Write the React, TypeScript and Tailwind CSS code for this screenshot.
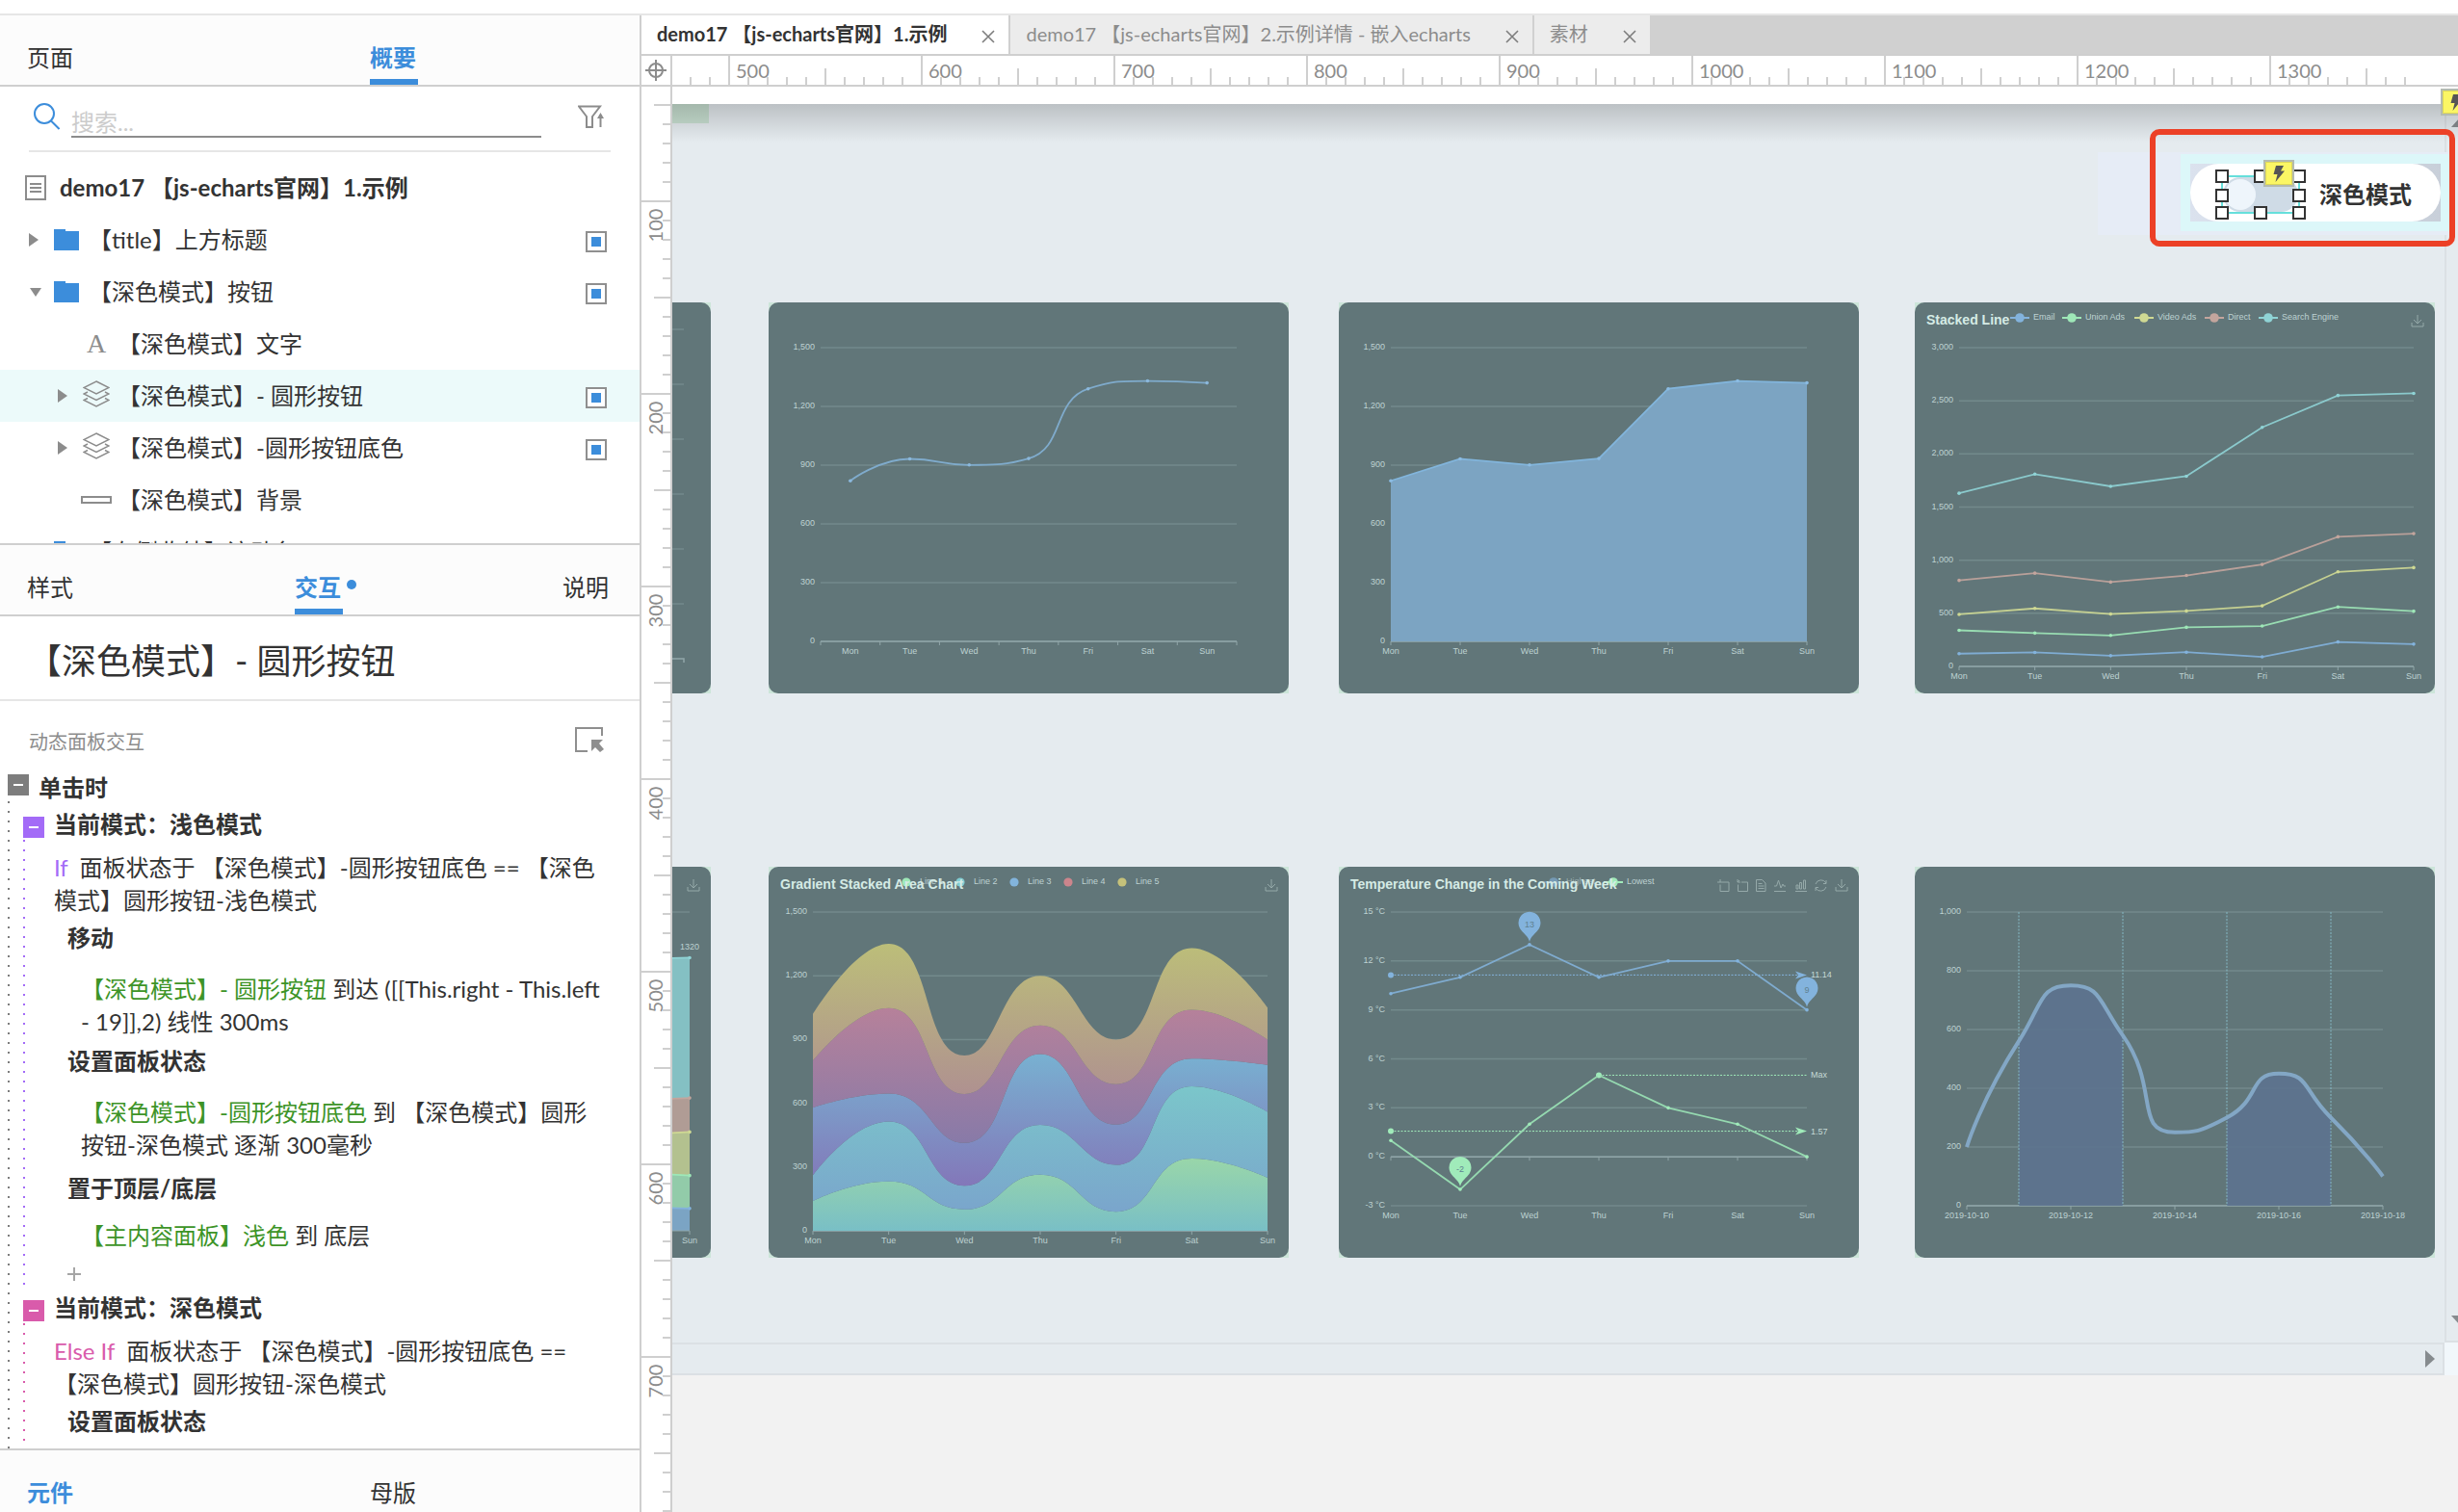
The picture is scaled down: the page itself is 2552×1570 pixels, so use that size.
import React from 'react';

const DAYS = ['Mon', 'Tue', 'Wed', 'Thu', 'Fri', 'Sat', 'Sun'];

type Pt = [number, number];

/* ---------- chart helpers ---------- */

const clamp = (v: number, a: number, b: number) => Math.max(Math.min(a, b), Math.min(Math.max(a, b), v));

// bezier smoothing with the control points kept between neighbours
const smoothSegments = (pts: Pt[], smooth: number, reverse = false): string => {
  let cp: Pt = pts[0];
  const segs: { c0: Pt; c1: Pt; from: Pt; to: Pt }[] = [];
  for (let i = 1; i < pts.length; i++) {
    const [px, py] = pts[i - 1];
    const [x, y] = pts[i];
    let c1: Pt = [x, y];
    let next: Pt = [x, y];
    if (i < pts.length - 1) {
      const [nx, ny] = pts[i + 1];
      const lenPrev = Math.hypot(x - px, y - py);
      const lenNext = Math.hypot(nx - x, ny - y);
      const ratio = lenNext / (lenNext + lenPrev);
      const ncx = clamp(x + (nx - px) * smooth * ratio, nx, x);
      const ncy = clamp(y + (ny - py) * smooth * ratio, ny, y);
      const cx = clamp(x - ((ncx - x) * lenPrev) / lenNext, px, x);
      const cy = clamp(y - ((ncy - y) * lenPrev) / lenNext, py, y);
      c1 = [cx, cy];
      next = [x + ((x - cx) * lenNext) / lenPrev, y + ((y - cy) * lenNext) / lenPrev];
    }
    segs.push({ c0: cp, c1, from: [px, py], to: [x, y] });
    cp = next;
  }
  if (reverse) {
    return segs.reverse().map((s) => `C${s.c1} ${s.c0} ${s.from}`).join(' ');
  }
  return segs.map((s) => `C${s.c0} ${s.c1} ${s.to}`).join(' ');
};

const polyline = (pts: Pt[]) => pts.map((p) => p.join(',')).join(' ');

const stack = (rows: number[][]) => {
  const acc: number[] = rows[0].map(() => 0);
  return rows.map((row) => row.map((v, i) => (acc[i] += v)));
};

interface Grid {
  left: number;
  right: number;
  top: number;
  bottom: number;
}

const WIDE: Grid = { left: 46, right: 518, top: 47, bottom: 378 };
const NARROW: Grid = { left: 54, right: 486, top: 47, bottom: 352 };

const xAt = (g: Grid, i: number, n: number) => g.left + ((g.right - g.left) * i) / (n - 1);
const yAt = (g: Grid, v: number, min: number, max: number) =>
  g.bottom - ((v - min) / (max - min)) * (g.bottom - g.top);

interface LabelProps {
  x: number;
  y: number;
  anchor?: 'start' | 'middle' | 'end';
  color?: string;
  children: React.ReactNode;
}

const Label: React.FC<LabelProps> = ({ x, y, anchor = 'middle', color = '#bed2d2', children }) => (
  <text x={x} y={y} textAnchor={anchor} dominantBaseline="central" fontSize={9} fill={color}>
    {children}
  </text>
);

const ChartTitle: React.FC<{ children: React.ReactNode }> = ({ children }) => (
  <text x={12} y={18} dominantBaseline="central" fontSize={14} fontWeight={700} fill="#d5ebe5">
    {children}
  </text>
);

interface AxesProps {
  grid: Grid;
  ticks: string[]; // top to bottom
  labels: string[];
  labelXs: number[];
  tickXs: number[];
  axisY?: number;
}

const Axes: React.FC<AxesProps> = ({ grid, ticks, labels, labelXs, tickXs, axisY = grid.bottom }) => (
  <g>
    {ticks.map((t, i) => {
      const y = grid.top + ((grid.bottom - grid.top) * i) / (ticks.length - 1);
      return (
        <g key={t}>
          <line x1={grid.left} x2={grid.right} y1={y} y2={y} stroke="#738a8c" strokeWidth={1.5} />
          <Label x={grid.left - 6} y={y - 1} anchor="end">{t}</Label>
        </g>
      );
    })}
    <line x1={grid.left} x2={grid.right} y1={axisY} y2={axisY} stroke="#91a6a9" strokeWidth={1.5} />
    {tickXs.map((x) => (
      <line key={x} x1={x} x2={x} y1={axisY} y2={axisY + 4} stroke="#91a6a9" strokeWidth={1} />
    ))}
    {labels.map((l, i) => (
      <Label key={l} x={labelXs[i]} y={grid.bottom + 10}>{l}</Label>
    ))}
  </g>
);

const DownloadIcon: React.FC<{ x?: number }> = ({ x = 516 }) => (
  <path
    d={`M${x} 21v4h12v-4M${x + 6} 13v9M${x + 2} 18l4 4 4-4`}
    fill="none"
    stroke="#95a9a9"
    strokeWidth={1}
  />
);

const Dots: React.FC<{ pts: Pt[]; color: string }> = ({ pts, color }) => (
  <g fill={color}>
    {pts.map(([x, y]) => (
      <circle key={x} cx={x} cy={y} r={1.8} />
    ))}
  </g>
);

const Card: React.FC<{ children: React.ReactNode; name: string }> = ({ children, name }) => (
  <div className="shrink-0 bg-[#cce5d9]">
    <svg
      viewBox="0 0 540 406"
      role="img"
      aria-label={name}
      className="block h-[406px] w-[540px] rounded-[10px] bg-[#617679] font-['Liberation_Sans',sans-serif]"
    >
      {children}
    </svg>
  </div>
);

/* ---------- charts ---------- */

const WEEK_VALUES = [820, 932, 901, 934, 1290, 1330, 1320];
const THOUSANDS = ['1,500', '1,200', '900', '600', '300', '0'];

const SmoothLine = () => {
  const step = (NARROW.right - NARROW.left) / 7;
  const xs = DAYS.map((_, i) => NARROW.left + step * (i + 0.5));
  const pts = WEEK_VALUES.map((v, i): Pt => [xs[i], yAt(NARROW, v, 0, 1500)]);
  return (
    <Card name="Smoothed line">
      <Axes
        grid={NARROW}
        ticks={THOUSANDS}
        labels={DAYS}
        labelXs={xs}
        tickXs={Array.from({ length: 8 }, (_, i) => NARROW.left + step * i)}
      />
      <path d={`M${pts[0]} ${smoothSegments(pts, 0.5)}`} fill="none" stroke="#7fabcc" strokeWidth={1.8} />
      <Dots pts={pts} color="#8bb8dc" />
    </Card>
  );
};

const BasicArea = () => {
  const xs = DAYS.map((_, i) => xAt(NARROW, i, 7));
  const pts = WEEK_VALUES.map((v, i): Pt => [xs[i], yAt(NARROW, v, 0, 1500)]);
  return (
    <Card name="Basic area">
      <Axes grid={NARROW} ticks={THOUSANDS} labels={DAYS} labelXs={xs} tickXs={xs} />
      <polygon
        points={`${polyline(pts)} ${NARROW.right},${NARROW.bottom} ${NARROW.left},${NARROW.bottom}`}
        fill="#7da6c5"
        fillOpacity={0.96}
      />
      <polyline points={polyline(pts)} fill="none" stroke="#82b5dc" strokeWidth={1.8} />
      <Dots pts={pts} color="#8bbbe2" />
    </Card>
  );
};

const STACKED = [
  { name: 'Email', color: '#83b3dd', dot: 109, data: [120, 132, 101, 134, 90, 230, 210] },
  { name: 'Union Ads', color: '#9ee8b8', dot: 163, data: [220, 182, 191, 234, 290, 330, 310] },
  { name: 'Video Ads', color: '#cfd993', dot: 238, data: [150, 232, 201, 154, 190, 330, 410] },
  { name: 'Direct', color: '#c3a59d', dot: 311, data: [320, 332, 301, 334, 390, 330, 320] },
  { name: 'Search Engine', color: '#8fd3d5', dot: 367, data: [820, 932, 901, 934, 1290, 1330, 1320] },
];
const STACKED_TICKS = ['3,000', '2,500', '2,000', '1,500', '1,000', '500', '0'];

const LegendMark: React.FC<{ x: number; color: string }> = ({ x, color }) => (
  <g>
    <line x1={x - 10} x2={x + 10} y1={16} y2={16} stroke={color} strokeWidth={1.8} />
    <circle cx={x} cy={16} r={4.8} fill={color} />
  </g>
);

const StackedLine = () => {
  const xs = DAYS.map((_, i) => xAt(WIDE, i, 7));
  const sums = stack(STACKED.map((s) => s.data));
  return (
    <Card name="Stacked Line">
      <Axes grid={WIDE} ticks={STACKED_TICKS} labels={DAYS} labelXs={xs} tickXs={xs} />
      {STACKED.map((s, n) => {
        const pts = sums[n].map((v, i): Pt => [xs[i], yAt(WIDE, v, 0, 3000)]);
        return (
          <g key={s.name}>
            <polyline points={polyline(pts)} fill="none" stroke={s.color} strokeOpacity={0.9} strokeWidth={1.8} />
            <Dots pts={pts} color={s.color} />
            <LegendMark x={s.dot} color={s.color} />
            <Label x={s.dot + 14} y={15} anchor="start">{s.name}</Label>
          </g>
        );
      })}
      <ChartTitle>Stacked Line</ChartTitle>
      <DownloadIcon />
    </Card>
  );
};

// only the right edge of these two cards is scrolled into view
const BarEdge = () => (
  <Card name="Bar">
    {[28, 85, 142, 199, 256, 313].map((y) => (
      <line key={y} x1={54} x2={512} y1={y} y2={y} stroke="#738a8c" strokeWidth={1.5} />
    ))}
    <path d="M54 370H512v4" fill="none" stroke="#91a6a9" strokeWidth={1.5} />
  </Card>
);

const AREA_FILLS = ['#7ba4c4', '#92cba9', '#b3c18f', '#b09c95', '#84c0c3'];

const StackedArea = () => {
  const xs = DAYS.map((_, i) => xAt(WIDE, i, 7));
  const sums = stack(STACKED.map((s) => s.data));
  return (
    <Card name="Stacked area">
      <line x1={WIDE.left} x2={WIDE.right} y1={WIDE.top} y2={WIDE.top} stroke="#738a8c" strokeWidth={1.5} />
      {[4, 3, 2, 1, 0].map((n) => {
        const pts = sums[n].map((v, i): Pt => [xs[i], yAt(WIDE, v, 0, 3000)]);
        return (
          <g key={n}>
            <polygon points={`${polyline(pts)} ${WIDE.right},${WIDE.bottom} ${WIDE.left},${WIDE.bottom}`} fill={AREA_FILLS[n]} />
            <polyline points={polyline(pts)} fill="none" stroke={STACKED[n].color} strokeWidth={1.8} />
            <Dots pts={pts} color={STACKED[n].color} />
          </g>
        );
      })}
      <path d={`M${WIDE.left} ${WIDE.bottom}H${WIDE.right}v4`} fill="none" stroke="#91a6a9" />
      <Label x={518} y={83}>1320</Label>
      <Label x={518} y={388}>Sun</Label>
      <DownloadIcon />
    </Card>
  );
};

const GRADIENT_LINES = [
  { name: 'Line 1', dot: 143, color: '#9ee8b8', from: '#99d6a9', to: '#79bfc6', data: [140, 232, 101, 264, 90, 340, 250] },
  { name: 'Line 2', dot: 199, color: '#7fccd2', from: '#7bc6ca', to: '#7aa5cc', data: [120, 282, 111, 234, 220, 340, 310] },
  { name: 'Line 3', dot: 255, color: '#82b4dc', from: '#78b1d1', to: '#8377b9', data: [320, 132, 201, 334, 190, 130, 220] },
  { name: 'Line 4', dot: 311, color: '#cc858c', from: '#b6819a', to: '#887aa8', data: [220, 402, 231, 134, 190, 230, 120] },
  { name: 'Line 5', dot: 367, color: '#c5c17a', from: '#bcbe79', to: '#af9190', data: [220, 302, 181, 234, 210, 290, 150] },
];

const GradientArea = () => {
  const xs = DAYS.map((_, i) => xAt(WIDE, i, 7));
  const sums = stack(GRADIENT_LINES.map((l) => l.data));
  const lines = sums.map((row) => row.map((v, i): Pt => [xs[i], yAt(WIDE, v, 0, 1500)]));
  return (
    <Card name="Gradient Stacked Area Chart">
      <defs>
        {GRADIENT_LINES.map((l, n) => (
          <linearGradient key={l.name} id={`area-${n}`} x1="0" y1="0" x2="0" y2="1">
            <stop offset="0" stopColor={l.from} />
            <stop offset="1" stopColor={l.to} />
          </linearGradient>
        ))}
      </defs>
      <Axes grid={WIDE} ticks={THOUSANDS} labels={DAYS} labelXs={xs} tickXs={xs} />
      {GRADIENT_LINES.map((l, n) => {
        const top = lines[n];
        const below = n === 0
          ? `L${WIDE.right},${WIDE.bottom} L${WIDE.left},${WIDE.bottom}`
          : `L${lines[n - 1][6]} ${smoothSegments(lines[n - 1], 0.5, true)}`;
        return (
          <g key={l.name}>
            <path d={`M${top[0]} ${smoothSegments(top, 0.5)} ${below}Z`} fill={`url(#area-${n})`} />
            <circle cx={l.dot} cy={16} r={4.6} fill={l.color} />
            <Label x={l.dot + 14} y={15} anchor="start">{l.name}</Label>
          </g>
        );
      })}
      <ChartTitle>Gradient Stacked Area Chart</ChartTitle>
      <DownloadIcon />
    </Card>
  );
};

const Pin: React.FC<{ at: Pt; color: string; value: string }> = ({ at: [x, y], color, value }) => (
  <g>
    <path
      d={`M${x} ${y - 3}C${x - 1} ${y - 9} ${x - 7} ${y - 12} ${x - 10} ${y - 17}A11.5 11.5 0 1 1 ${x + 10} ${y - 17}C${x + 7} ${y - 12} ${x + 1} ${y - 9} ${x} ${y - 3}Z`}
      fill={color}
    />
    <Label x={x} y={y - 21} color="#5f8291">{value}</Label>
  </g>
);

const Temperature = () => {
  const g = NARROW;
  const xs = DAYS.map((_, i) => xAt(g, i, 7));
  const at = (v: number) => yAt(g, v, -3, 15);
  const high = [10, 11, 13, 11, 12, 12, 9].map((v, i): Pt => [xs[i], at(v)]);
  const low = [1, -2, 2, 5, 3, 2, 0].map((v, i): Pt => [xs[i], at(v)]);
  const blue = '#83b3dd';
  const green = '#a0ebba';
  return (
    <Card name="Temperature Change in the Coming Week">
      <Axes
        grid={g}
        ticks={['15 °C', '12 °C', '9 °C', '6 °C', '3 °C', '0 °C', '-3 °C']}
        labels={DAYS}
        labelXs={xs}
        tickXs={xs}
        axisY={at(0)}
      />
      {[{ v: 11.14, c: blue }, { v: 1.57, c: green }].map(({ v, c }) => (
        <g key={v}>
          <line x1={g.left} x2={g.right - 10} y1={at(v)} y2={at(v)} stroke={c} strokeDasharray="2 1.5" />
          <circle cx={g.left} cy={at(v)} r={3} fill={c} />
          <path d={`M${g.right} ${at(v)}l-12 -4l3 4l-3 4Z`} fill={c} />
          <Label x={g.right + 4} y={at(v)} anchor="start" color="#c5d9d6">{v}</Label>
        </g>
      ))}
      <line x1={xs[3]} x2={g.right} y1={at(5)} y2={at(5)} stroke={green} strokeDasharray="2 1.5" />
      <circle cx={xs[3]} cy={at(5)} r={3} fill={green} />
      <Label x={g.right + 4} y={at(5)} anchor="start" color="#c5d9d6">Max</Label>
      <polyline points={polyline(high)} fill="none" stroke="#7fabcf" strokeWidth={1.8} />
      <polyline points={polyline(low)} fill="none" stroke="#95d9b0" strokeWidth={1.8} />
      <Dots pts={high} color={blue} />
      <Dots pts={low} color={green} />
      <Pin at={high[2]} color={blue} value="13" />
      <Pin at={high[6]} color={blue} value="9" />
      <Pin at={low[1]} color={green} value="-2" />
      <g opacity={0.6}>
        <LegendMark x={223} color={blue} />
        <Label x={236} y={15} anchor="start">Highest</Label>
      </g>
      <LegendMark x={285} color={green} />
      <Label x={299} y={15} anchor="start">Lowest</Label>
      <ChartTitle>Temperature Change in the Coming Week</ChartTitle>
      {/* toolbox: zoom, zoom back, data view, line, bar, restore, save */}
      <g fill="none" stroke="#95a9a9" strokeWidth={1}>
        <path d="M393 16h3M396 13v3h9v9.500h-9v-7M399 16" />
        <path d="M414 13v3h3M414 16l2-2M418 16h6.500v9.500h-10v-7" />
        <path d="M433.500 13.500h6l3.500 3.500v8.500h-9.500zM435.500 17.500h4M435.500 20h6M435.500 22.500h6" />
        <path d="M452 25.500h12M452 20h2.500l2-6 2.500 8 2-4 1 2h2" />
        <path d="M474 25.500h12M475 19h2v4h-2zM478.500 16.500h2v6.500h-2zM482.500 14h2v9h-2z" />
        <path d="M495 18a6 6 0 0 1 11-1M506 21a6 6 0 0 1-11 1M506 14v3.500h-3M495 25v-3.500h3" />
      </g>
      <DownloadIcon />
    </Card>
  );
};

const SegmentArea = () => {
  const g = NARROW;
  const pts = [200, 560, 750, 580, 250, 300, 450, 300, 100].map(
    (v, i): Pt => [xAt(g, i, 9), yAt(g, v, 0, 1000)],
  );
  const curve = `M${pts[0]} ${smoothSegments(pts, 0.6)}`;
  const labelXs = [0, 2, 4, 6, 8].map((i) => pts[i][0]);
  return (
    <Card name="Area pieces">
      <defs>
        <clipPath id="pieces">
          <rect x={pts[1][0]} y={g.top} width={108} height={305} />
          <rect x={pts[5][0]} y={g.top} width={108} height={305} />
        </clipPath>
      </defs>
      <Axes
        grid={g}
        ticks={['1,000', '800', '600', '400', '200', '0']}
        labels={['2019-10-10', '2019-10-12', '2019-10-14', '2019-10-16', '2019-10-18']}
        labelXs={labelXs}
        tickXs={labelXs}
      />
      <path d={`${curve} L${g.right},${g.bottom} L${g.left},${g.bottom}Z`} fill="#5c7390" fillOpacity={0.88} clipPath="url(#pieces)" />
      {[1, 3, 5, 7].map((i) => (
        <line key={i} x1={pts[i][0]} x2={pts[i][0]} y1={g.top} y2={g.bottom} stroke="#85b9c6" strokeDasharray="2 1.5" />
      ))}
      <path d={curve} fill="none" stroke="#83a7c5" strokeWidth={4} />
    </Card>
  );
};

/* ---------- left panels ---------- */

interface PanelTabProps {
  label: string;
  active?: boolean;
  underline?: boolean;
  dot?: boolean;
}

const PanelTab: React.FC<PanelTabProps> = ({ label, active, underline, dot }) => (
  <button
    className={`relative flex h-[72px] w-[50px] shrink-0 items-center pt-4 whitespace-nowrap ${
      active ? 'font-bold text-[#3c8ddb]' : 'text-[#333]'
    } ${underline ? 'shadow-[inset_0_-6px_0_#3c8ddb]' : ''}`}
  >
    {label}
    {dot && <span className="absolute top-9 left-[54px] h-2.5 w-2.5 rounded-full bg-[#3c8ddb]" />}
  </button>
);

const ViewToggle = () => (
  <button aria-label="显示" className="mt-1 ml-auto flex h-[22px] w-[22px] items-center justify-center border-2 border-[#8f8f8f] bg-white">
    <span className="h-2.5 w-2.5 bg-[#3c8ddb]" />
  </button>
);

const Arrow: React.FC<{ open?: boolean }> = ({ open }) => (
  <svg viewBox="0 0 14 14" className="h-3.5 w-3.5 shrink-0" fill="#8c8c8c" aria-hidden="true">
    <path d={open ? 'M1 3H13L7 12Z' : 'M0 0V14L10 7Z'} />
  </svg>
);

const FolderIcon = () => (
  <svg viewBox="0 0 26 22" className="h-[22px] w-[26px] shrink-0" fill="#3c8ddb" aria-hidden="true">
    <path d="M0 0H12V2H26V22H0Z" />
  </svg>
);

const LayersIcon = () => (
  <svg viewBox="0 0 28 28" className="mb-1 h-7 w-7 shrink-0" fill="none" stroke="#8c8c8c" strokeWidth="1.4" aria-hidden="true">
    <path d="M14 1L27 7.500L14 14L1 7.500Z" />
    <path d="M5 12L1 14L14 20.500L27 14L23 12" />
    <path d="M5 18.500L1 20.500L14 27L27 20.500L23 18.500" />
  </svg>
);

interface OutlineItem {
  label: string;
  icon: 'folder' | 'text' | 'layers' | 'rect';
  open?: boolean;
  toggle?: boolean;
  selected?: boolean;
}

const OUTLINE: OutlineItem[] = [
  { label: '【title】上方标题', icon: 'folder', toggle: true },
  { label: '【深色模式】按钮', icon: 'folder', open: true, toggle: true },
  { label: '【深色模式】文字', icon: 'text' },
  { label: '【深色模式】- 圆形按钮', icon: 'layers', toggle: true, selected: true },
  { label: '【深色模式】-圆形按钮底色', icon: 'layers', toggle: true },
  { label: '【深色模式】背景', icon: 'rect' },
  { label: '【右侧收纳】滚动条', icon: 'folder' },
];

const OutlineRow: React.FC<{ item: OutlineItem }> = ({ item }) => {
  const child = item.icon !== 'folder';
  return (
    <li className={`flex h-[54px] shrink-0 items-center pr-[34px] ${child ? 'pl-[60px]' : 'pl-[30px]'} ${item.selected ? 'bg-[#ecfafa]' : ''}`}>
      <span className="flex h-full w-3.5 items-center">
        {(item.icon === 'layers' || item.icon === 'folder') && <Arrow open={item.open} />}
      </span>
      <span className={`flex shrink-0 items-center justify-center ${child ? 'ml-2.5 w-8' : 'ml-3 w-[26px]'}`}>
        {item.icon === 'folder' && <FolderIcon />}
        {item.icon === 'layers' && <LayersIcon />}
        {item.icon === 'text' && (
          <span className="font-['Liberation_Serif',serif] text-[28px] leading-none text-[#8c8c8c]">A</span>
        )}
        {item.icon === 'rect' && <span className="h-2 w-8 border-2 border-[#8c8c8c]" />}
      </span>
      <span className={`whitespace-nowrap ${child ? 'ml-1.5' : 'ml-2.5'}`}>{item.label}</span>
      {item.toggle && <ViewToggle />}
    </li>
  );
};

const OutlinePanel = () => (
  <section className="flex h-[550px] shrink-0 flex-col overflow-hidden border-b-2 border-[#cfcfcf]">
    <div className="flex shrink-0 border-b-2 border-[#cfcfcf] bg-[#fcfcfc] pl-7">
      <div className="w-[356px]">
        <PanelTab label="页面" />
      </div>
      <PanelTab label="概要" active underline />
    </div>
    <div className="mx-[30px] flex h-[68px] shrink-0 items-center border-b-2 border-[#e6e6e6]">
      <svg viewBox="0 0 28 28" className="mx-1 mb-1 h-7 w-7 shrink-0" fill="none" stroke="#3c8ddb" strokeWidth="2" aria-hidden="true">
        <circle cx="12" cy="11" r="10" />
        <path d="M19 18.500L27.500 27" />
      </svg>
      <input
        type="text"
        aria-label="搜索"
        placeholder="搜索..."
        className="mt-1 ml-2 h-9 w-[488px] border-b-2 border-[#8c8c8c] bg-transparent pt-1 outline-none placeholder:text-[#ccc]"
      />
      <button aria-label="筛选" className="mb-1 ml-auto mr-1.5">
        <svg viewBox="0 0 28 24" className="h-6 w-7" fill="none" stroke="#8c8c8c" strokeWidth="2">
          <path d="M1 1.500H23L15 12V23H9V12Z" />
          <path d="M23.500 23V10" />
          <path d="M23.500 8L27 14H20Z" fill="#8c8c8c" stroke="none" />
        </svg>
      </button>
    </div>
    <ul className="flex flex-col pt-2.5">
      <li className="flex h-[54px] shrink-0 items-center pl-[26px] font-bold">
        <svg viewBox="0 0 22 26" className="mr-3.5 h-[26px] w-[22px]" fill="none" stroke="#8c8c8c" strokeWidth="2" aria-hidden="true">
          <path d="M1 1H21V25H1ZM5 9H17M5 13H17M5 17H17" />
        </svg>
        demo17 【js-echarts官网】1.示例
      </li>
      {OUTLINE.map((item) => (
        <OutlineRow key={item.label} item={item} />
      ))}
    </ul>
  </section>
);

const Minus: React.FC<{ color: string }> = ({ color }) => (
  <button aria-label="折叠" className={`flex h-[22px] w-[22px] shrink-0 items-center justify-center ${color}`}>
    <span className="h-0.5 w-2.5 bg-white" />
  </button>
);

interface BranchProps {
  title: string;
  box: string;
  rail: string;
  children: React.ReactNode;
}

const Branch: React.FC<BranchProps> = ({ title, box, rail, children }) => (
  <div className="flex pt-2">
    <div className="flex w-[22px] shrink-0 flex-col pt-2">
      <Minus color={box} />
      <span className={`mt-0.5 w-0.5 flex-1 ${rail}`} />
    </div>
    <div className="ml-2.5 whitespace-nowrap">
      <h4 className="leading-8 font-bold">{title}</h4>
      {children}
    </div>
  </div>
);

const Target: React.FC<{ children: React.ReactNode }> = ({ children }) => (
  <span className="text-[#3d9427]">{children}</span>
);

const InteractionPanel = () => (
  <section className="flex min-h-0 flex-1 flex-col overflow-hidden">
    <div className="flex shrink-0 justify-between border-b-2 border-[#cfcfcf] bg-[#fcfcfc] pr-[30px] pl-7">
      <PanelTab label="样式" />
      <PanelTab label="交互" active underline dot />
      <PanelTab label="说明" />
    </div>
    <h2 className="shrink-0 border-b-2 border-[#e6e6e6] pt-1.5 pl-7 text-4xl leading-[80px]">【深色模式】- 圆形按钮</h2>
    <div className="flex h-[76px] shrink-0 items-center justify-between pt-1 pr-[37px] pl-[30px]">
      <span className="pt-1 text-xl text-[#8c8c8c]">动态面板交互</span>
      <button aria-label="选择目标">
        <svg viewBox="0 0 30 28" className="h-7 w-[30px]" fill="none" stroke="#8f8f8f" strokeWidth="2">
          <path d="M28 10V2H1V26H13" />
          <path d="M17 14H29L25 18L30 24L26 27L21 22L17 26Z" fill="#8f8f8f" stroke="none" />
        </svg>
      </button>
    </div>
    <div className="flex min-h-0 flex-1 flex-col pl-2">
      <div className="flex h-7 shrink-0">
        <Minus color="bg-[#7d7d7d]" />
        <h3 className="ml-2.5 leading-7 font-bold">单击时</h3>
      </div>
      <div className="flex min-h-0 flex-1">
        <span className="w-0.5 shrink-0 bg-[repeating-linear-gradient(to_bottom,#7d7d7d_0_2px,transparent_2px_10px)]" />
        <div className="ml-3.5">
          <Branch
            title="当前模式：浅色模式"
            box="bg-[#a36bf7]"
            rail="bg-[repeating-linear-gradient(to_bottom,#a36bf7_0_2px,transparent_2px_10px)]"
          >
            <p className="mt-3 leading-[34px]">
              <span className="text-[#a36bf7]">If</span>&nbsp; 面板状态于 【深色模式】-圆形按钮底色 == 【深色<br />
              模式】圆形按钮-浅色模式
            </p>
            <h5 className="mt-1.5 ml-3.5 leading-8 font-bold">移动</h5>
            <p className="mt-5 ml-7 leading-[34px]">
              <Target>【深色模式】- 圆形按钮</Target> 到达 ([[This.right - This.left<br />
              - 19]],2) 线性 300ms
            </p>
            <h5 className="mt-2 ml-3.5 leading-8 font-bold">设置面板状态</h5>
            <p className="mt-5 ml-7 leading-[34px]">
              <Target>【深色模式】-圆形按钮底色</Target> 到 【深色模式】圆形<br />
              按钮-深色模式 逐渐 300毫秒
            </p>
            <h5 className="mt-3 ml-3.5 leading-8 font-bold">置于顶层/底层</h5>
            <p className="mt-4 ml-7 leading-[34px]">
              <Target>【主内容面板】浅色</Target> 到 底层
            </p>
            <button aria-label="添加" className="mt-4 mb-1 ml-3.5 block">
              <svg viewBox="0 0 14 14" className="h-3.5 w-3.5" stroke="#a6a6a6" strokeWidth="2">
                <path d="M7 0V14M0 7H14" />
              </svg>
            </button>
          </Branch>
          <Branch
            title="当前模式：深色模式"
            box="bg-[#d95bab]"
            rail="bg-[repeating-linear-gradient(to_bottom,#d95bab_0_2px,transparent_2px_10px)]"
          >
            <p className="mt-3 leading-[34px]">
              <span className="text-[#d95bab]">Else If</span>&nbsp; 面板状态于 【深色模式】-圆形按钮底色 ==<br />
              【深色模式】圆形按钮-深色模式
            </p>
            <h5 className="mt-1.5 ml-3.5 leading-8 font-bold">设置面板状态</h5>
            <div className="h-4" />
          </Branch>
        </div>
      </div>
    </div>
  </section>
);

/* ---------- canvas ---------- */

const DOC_TABS = [
  { label: 'demo17 【js-echarts官网】1.示例', active: true },
  { label: 'demo17 【js-echarts官网】2.示例详情 - 嵌入echarts' },
  { label: '素材' },
];

// one ruler unit is two pixels
const TICKS_X = Array.from({ length: 90 }, (_, i) => 480 + i * 10);
const TICKS_Y = Array.from({ length: 74 }, (_, i) => 50 + i * 10);

const tickLength = (v: number) => (v % 100 === 0 ? 30 : v % 50 === 0 ? 17 : 8);

const TopRuler = () => (
  <svg className="h-[30px] min-w-0 flex-1" fill="#cfcfcf" aria-hidden="true">
    {TICKS_X.map((v) => {
      const len = tickLength(v);
      const x = 58 + (v - 500) * 2;
      return (
        <g key={v}>
          <rect x={x} y={30 - len} width={2} height={len} />
          {v % 100 === 0 && (
            <text x={x + 8} y={15} dominantBaseline="central" fontSize={20} fill="#8c8c8c">{v}</text>
          )}
        </g>
      );
    })}
  </svg>
);

const SideRuler = () => (
  <svg className="h-full w-8 shrink-0 border-r-2 border-[#cfcfcf] bg-white" fill="#cfcfcf" aria-hidden="true">
    {TICKS_Y.map((v) => {
      const len = tickLength(v);
      const y = 118 + (v - 100) * 2;
      return (
        <g key={v}>
          <rect x={30 - len} y={y} width={len} height={2} />
          {v % 100 === 0 && (
            <text
              transform={`translate(14 ${y + 26}) rotate(-90)`}
              textAnchor="middle"
              dominantBaseline="central"
              fontSize={20}
              fill="#8c8c8c"
            >
              {v}
            </text>
          )}
        </g>
      );
    })}
  </svg>
);

const BoltBadge = () => (
  <svg viewBox="0 0 32 28" className="block h-7 w-8" aria-hidden="true">
    <rect x="1" y="1" width="30" height="26" fill="#fbf664" stroke="#b4bbb0" strokeWidth="2" />
    <path d="M2.500 2.500H29.500V25.500H2.500Z" fill="none" stroke="#dcd65a" />
    <path d="M13 6H21L18 11.500H22L12.500 23L14.500 15H10.500Z" fill="#555" />
  </svg>
);

const Handle: React.FC<{ className: string }> = ({ className }) => (
  <span className={`absolute h-3.5 w-3.5 border-2 border-[#333] bg-white ${className}`} />
);

const DarkModeWidget = () => (
  <>
    <div className="absolute top-[50px] left-[1480px] h-[86px] w-[366px] bg-[#e6ecf6]" />
    <div className="absolute top-[52px] left-[1566px] flex h-20 w-[280px] items-center bg-[#dcf7f9] pl-2.5">
      <div className="h-[60px] w-[260px] bg-linear-to-r from-[#dbe2ee] to-[#c8cfd9]">
        <div className="flex h-full items-center rounded-[30px] bg-white pt-1 pl-8">
          <div className="relative h-10 w-[82px] border-2 border-[#66dfdb]">
            <button
              role="switch"
              aria-checked="false"
              aria-labelledby="mode-label"
              className="flex h-full w-full items-center rounded-full bg-[#cfdbe6] pl-0.5"
            >
              <span className="h-8 w-8 rounded-full bg-[#eef5fb]" />
            </button>
            <Handle className="-top-2 -left-2" />
            <Handle className="-top-2 left-8" />
            <Handle className="-top-2 -right-2" />
            <Handle className="top-3 -left-2" />
            <Handle className="top-3 -right-2" />
            <Handle className="-bottom-2 -left-2" />
            <Handle className="-bottom-2 left-8" />
            <Handle className="-right-2 -bottom-2" />
            <span className="absolute -top-[18px] left-[42px]">
              <BoltBadge />
            </span>
          </div>
          <span id="mode-label" className="ml-5 text-2xl font-bold whitespace-nowrap">深色模式</span>
        </div>
      </div>
    </div>
    <div className="absolute top-[26px] left-[1534px] h-[122px] w-[317px] rounded-[10px] border-[6px] border-[#ec4026]" />
  </>
);

const Canvas = () => (
  <div className="min-w-0 flex-1 overflow-hidden bg-[#f2f2f2]">
    <div className="h-[18px] bg-white" />
    <div className="relative flex bg-[#e5ebef]">
      <div className="absolute top-0 left-0 h-5 w-[38px] bg-[#c8e0d1]" />
      <div className="absolute top-0 left-0 h-10 w-full bg-linear-to-b from-black/18 to-transparent" />
      <div className="w-[1840px] shrink-0">
        <div className="flex pt-[206px]">
          <div className="flex w-10 shrink-0 justify-end overflow-hidden"><BarEdge /></div>
          <div className="ml-[60px]"><SmoothLine /></div>
          <div className="ml-[52px]"><BasicArea /></div>
          <div className="ml-[58px]"><StackedLine /></div>
        </div>
        <div className="flex pt-[180px] pb-[88px]">
          <div className="flex w-10 shrink-0 justify-end overflow-hidden"><StackedArea /></div>
          <div className="ml-[60px]"><GradientArea /></div>
          <div className="ml-[52px]"><Temperature /></div>
          <div className="ml-[58px]"><SegmentArea /></div>
        </div>
        <div className="flex h-[34px] items-center justify-end border-2 border-l-0 border-[#dbe0e4] pr-2">
          <svg viewBox="0 0 10 18" className="h-[18px] w-2.5" fill="#868b8e" aria-hidden="true">
            <path d="M0 0V18L10 9Z" />
          </svg>
        </div>
      </div>
      <div className="flex w-8 shrink-0 flex-col">
        <div className="flex flex-1 flex-col items-center justify-between border-2 border-t-0 border-[#dbe0e4] pt-3.5 pb-4">
          <svg viewBox="0 0 18 10" className="h-2.5 w-[18px]" fill="#868b8e" aria-hidden="true">
            <path d="M0 10L9 0L18 10Z" />
          </svg>
          <svg viewBox="0 0 18 10" className="h-2.5 w-[18px]" fill="#868b8e" aria-hidden="true">
            <path d="M0 0L9 10L18 0Z" />
          </svg>
        </div>
        <div className="h-[34px] bg-[#f1f7fb]" />
      </div>
      <span className="absolute -top-4 left-[1836px]">
        <BoltBadge />
      </span>
      <DarkModeWidget />
    </div>
  </div>
);

export default function App() {
  return (
    <div className="flex h-screen flex-col overflow-hidden bg-white font-['Lato','Noto_Sans_CJK_SC',sans-serif] text-2xl text-[#333]">
      <header className="h-4 shrink-0 border-b-2 border-[#e6e6e6]" />
      <div className="flex min-h-0 flex-1">
        <aside className="flex w-[666px] shrink-0 flex-col border-r-2 border-[#cfcfcf]">
          <OutlinePanel />
          <InteractionPanel />
          <div className="flex h-[66px] shrink-0 overflow-hidden border-t-2 border-[#cfcfcf] bg-[#fcfcfc] pl-7">
            <div className="w-[356px]">
              <PanelTab label="元件" active />
            </div>
            <PanelTab label="母版" />
          </div>
        </aside>
        <main className="flex min-w-0 flex-1 flex-col">
          <nav className="flex h-[42px] shrink-0 border-b-2 border-[#cfcfcf] bg-[#d0d0d0] text-xl">
            {DOC_TABS.map((tab) => (
              <div
                key={tab.label}
                className={`flex items-center gap-9 border-r-2 border-[#d0d0d0] pr-3.5 pl-4 whitespace-nowrap ${
                  tab.active ? 'bg-white font-bold' : 'bg-[#ececec] text-[#8c8c8c]'
                }`}
              >
                <a href="#" className="pb-0.5">{tab.label}</a>
                <button aria-label="关闭" className="pt-1">
                  <svg viewBox="0 0 14 14" className="h-3.5 w-3.5" stroke="#7d7d7d" strokeWidth="1.6">
                    <path d="M1 1L13 13M13 1L1 13" />
                  </svg>
                </button>
              </div>
            ))}
          </nav>
          <div className="flex h-8 shrink-0 border-b-2 border-[#cfcfcf]">
            <div className="flex w-8 shrink-0 items-center justify-center border-r-2 border-[#cfcfcf]">
              <svg viewBox="0 0 24 24" className="h-6 w-6" fill="none" stroke="#8c8c8c" strokeWidth="2" aria-hidden="true">
                <circle cx="12" cy="12" r="7" />
                <path d="M12 1V23M1 12H23" />
              </svg>
            </div>
            <TopRuler />
          </div>
          <div className="flex min-h-0 flex-1">
            <SideRuler />
            <Canvas />
          </div>
        </main>
      </div>
    </div>
  );
}
